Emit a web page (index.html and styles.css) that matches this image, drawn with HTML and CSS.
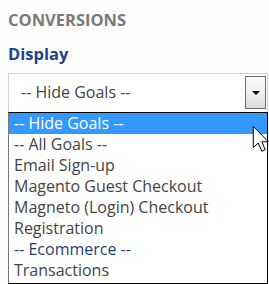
FILE: index.html
```html
<!DOCTYPE html>
<html lang="en">
<head>
  <meta charset="UTF-8">
  <title>Conversions</title>
  <link rel="stylesheet" href="styles.css">
</head>
<body>
  <div class="panel">
    <h3 class="section-title">CONVERSIONS</h3>
    <label class="field-label">Display</label>

    <div class="select">
      <span class="select-value">-- Hide Goals --</span>
      <span class="select-button"><span class="caret"></span></span>
    </div>

    <ul class="options">
      <li class="selected">-- Hide Goals --</li>
      <li>-- All Goals --</li>
      <li>Email Sign-up</li>
      <li>Magento Guest Checkout</li>
      <li>Magneto (Login) Checkout</li>
      <li>Registration</li>
      <li class="group">-- Ecommerce --</li>
      <li>Transactions</li>
    </ul>
  </div>

  <!-- mouse pointer over the open list -->
  <svg class="cursor" width="20" height="30" viewBox="0 0 16 24">
    <path d="M1 1 L1 18 L5 14.4 L7.8 21 L10.6 19.8 L7.9 13.4 L13 13.4 Z" fill="#fff" stroke="#000" stroke-width="0.8" stroke-linejoin="round"/>
  </svg>
</body>
</html>
```

FILE: styles.css
```css
* { margin: 0; padding: 0; box-sizing: border-box; }
body {
  font-family: "Open Sans", "Noto Sans", Arial, sans-serif;
  background-color: #fdfdfd;
  overflow: hidden;
}

.panel {
  padding: 10px 1px 0 8px;
}

.section-title {
  font-size: 16.5px;
  line-height: 20px;
  font-weight: bold;
  color: #7a7a7a;
}

.field-label {
  display: block;
  margin-top: 14px;
  font-size: 16.5px;
  line-height: 20px;
  font-weight: bold;
  color: #1b4586;
}

.select {
  display: flex;
  align-items: center;
  justify-content: space-between;
  margin-top: 9px;
  height: 39px;
  padding: 0 1px 3px 12px;
  background-color: #fff;
  border: 1px solid #d4d4d4;
  border-bottom: none;
}

.select-value {
  font-size: 16px;
  color: #444;
}

.select-button {
  display: flex;
  align-items: center;
  justify-content: center;
  width: 21px;
  height: 33px;
  margin-top: 2px;
  border: 1px solid #6e6e6e;
  background: linear-gradient(#fbfbfb, #f0f0f0 45%, #dcdcdc);
}

.caret {
  width: 0;
  height: 0;
  border-left: 4px solid transparent;
  border-right: 4px solid transparent;
  border-top: 4px solid #000;
}

.options {
  list-style: none;
  height: 172px;
  overflow: hidden;
  background-color: #fff;
  border: 1px solid #000;
  border-left-color: #777;
}

.options li {
  height: 21px;
  line-height: 21px;
  padding-left: 5px;
  font-size: 16px;
  color: #444;
  white-space: nowrap;
}

.options li.selected {
  background-color: #3399ff;
  color: #fff;
}

.options li.group {
  color: #1d3f7a;
}

.cursor {
  position: absolute;
  left: 252px;
  top: 125px;
}
```
